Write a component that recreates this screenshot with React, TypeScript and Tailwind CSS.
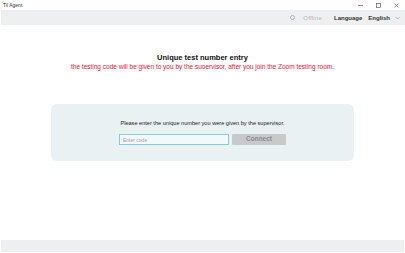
import React, { useState } from 'react';

const TitleBar: React.FC = () => (
  <div className="h-[10px] flex items-center justify-between bg-white pl-[3px] pr-[6px]">
    <span className="text-[5px] leading-none text-[#333]">Til Agent</span>
    <div className="flex items-center gap-[13px] text-[#444]">
      <svg width="5" height="5" viewBox="0 0 5 5"><path d="M0 2.5h5" stroke="currentColor" strokeWidth="0.6" /></svg>
      <svg width="5" height="5" viewBox="0 0 5 5"><rect x="0.5" y="0.5" width="4" height="4" fill="none" stroke="currentColor" strokeWidth="0.6" /></svg>
      <svg width="5" height="5" viewBox="0 0 5 5"><path d="M0.5 0.5l4 4M4.5 0.5l-4 4" stroke="currentColor" strokeWidth="0.6" /></svg>
    </div>
  </div>
);

const Header: React.FC = () => (
  <header className="h-[15px] bg-[#eeeff1] flex items-center justify-end pr-[5px] border-l border-white">
    <div className="flex items-center text-[6px] leading-none">
      <span className="w-[5px] h-[5px] rounded-full border border-[#b0b2b4] mr-[8px]" />
      <span className="text-[#b4b6b8] tracking-[0.2px] mr-[12px]">Offline</span>
      <span className="text-[#333] font-semibold mr-[6px]">Language</span>
      <span className="text-[#333] font-semibold mr-[5px]">English</span>
      <svg width="5" height="4" viewBox="0 0 5 4" className="text-[#999]"><path d="M0.5 1l2 2 2-2" fill="none" stroke="currentColor" strokeWidth="0.6" /></svg>
    </div>
  </header>
);

export default function App() {
  const [code, setCode] = useState('');

  return (
    <div className="h-screen w-full flex flex-col bg-white font-['Liberation_Sans',Arial,sans-serif]">
      <TitleBar />
      <Header />
      <main className="flex-1 flex flex-col items-center pt-[28px]">
        <h1 className="text-[7.5px] leading-[9px] font-bold text-[#111]">Unique test number entry</h1>
        <p className="mt-[1px] text-[6.5px] leading-[8px] text-[#e8163c]">
          the testing code will be given to you by the suoervisor, after you join the Zoom testing room.
        </p>
        <div className="mt-[33px] w-[303px] h-[57px] rounded-[6px] bg-[#e9f1f3] flex flex-col items-center pt-[16px]">
          <p className="text-[5.6px] leading-[7px] text-[#222]">
            Please enter the unique number you were given by the supervisor.
          </p>
          <div className="mt-[7px] flex gap-[3px]">
            <input
              value={code}
              onChange={(e) => setCode(e.target.value)}
              placeholder="Enter code"
              className="w-[110px] h-[11px] bg-[#f3f8fa] border-[0.6px] border-[#8cc8e0] px-[3px] text-[5px] text-[#333] placeholder:text-[#a0a4a8] outline-none"
            />
            <button
              disabled={!code}
              className="w-[54px] h-[11px] bg-[#c8c9cb] rounded-[1px] text-[6.5px] font-bold leading-none text-[#8a8c8e]"
            >
              Connect
            </button>
          </div>
        </div>
      </main>
      <footer className="h-[12px] bg-[#eeeff1] border-x border-white mb-[1px]" />
    </div>
  );
}
